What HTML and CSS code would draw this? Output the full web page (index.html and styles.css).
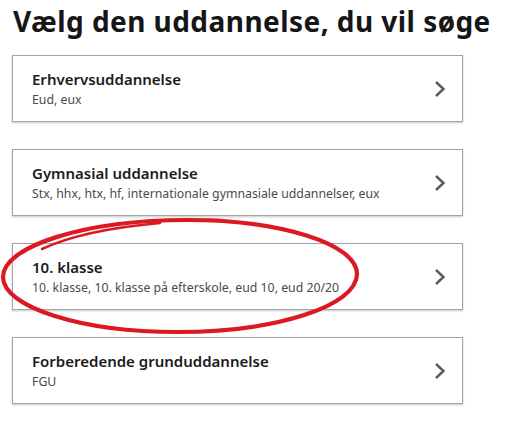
FILE: index.html
```html
<!DOCTYPE html>
<html lang="da">
<head>
<meta charset="utf-8">
<title>Vælg den uddannelse, du vil søge</title>
<link rel="stylesheet" href="styles.css">
</head>
<body>
<main class="page">
  <h1 class="heading">Vælg den uddannelse, du vil søge</h1>
  <ul class="list">
    <li class="card">
      <div class="card-text">
        <div class="card-title">Erhvervsuddannelse</div>
        <div class="card-sub">Eud, eux</div>
      </div>
      <svg class="chev" viewBox="0 0 12 18" width="12" height="18"><path d="M2 2 L9.5 9 L2 16"/></svg>
    </li>
    <li class="card">
      <div class="card-text">
        <div class="card-title">Gymnasial uddannelse</div>
        <div class="card-sub">Stx, hhx, htx, hf, internationale gymnasiale uddannelser, eux</div>
      </div>
      <svg class="chev" viewBox="0 0 12 18" width="12" height="18"><path d="M2 2 L9.5 9 L2 16"/></svg>
    </li>
    <li class="card">
      <div class="card-text">
        <div class="card-title">10. klasse</div>
        <div class="card-sub">10. klasse, 10. klasse på efterskole, eud 10, eud 20/20</div>
      </div>
      <svg class="chev" viewBox="0 0 12 18" width="12" height="18"><path d="M2 2 L9.5 9 L2 16"/></svg>
    </li>
    <li class="card">
      <div class="card-text">
        <div class="card-title">Forberedende grunduddannelse</div>
        <div class="card-sub">FGU</div>
      </div>
      <svg class="chev" viewBox="0 0 12 18" width="12" height="18"><path d="M2 2 L9.5 9 L2 16"/></svg>
    </li>
  </ul>
  <svg class="mark" viewBox="0 0 531 424" width="531" height="424">
    <path d="M187 220 C281 220 357 244 357 274 C357 306 276 332 177 332 C81 332 3 307 3 277 C3 246 86 220 187 220 C200 220 212 220 224 221"/>
    <path class="thin" d="M42 249 C72 235 115 227 160 223"/>
  </svg>
</main>
</body>
</html>
```
FILE: styles.css
```css
html, body {
  margin: 0;
  padding: 0;
  background: #ffffff;
}
.page {
  position: relative;
  width: 531px;
  height: 424px;
  box-sizing: border-box;
  padding: 4px 12px 0 12px;
  font-family: "Noto Sans", "Liberation Sans", sans-serif;
  color: #1b1b1b;
  overflow: hidden;
}
.heading {
  margin: 0 0 17px 1px;
  font-size: 28px;
  line-height: 34px;
  font-weight: 700;
  letter-spacing: 0.45px;
  color: #161616;
  white-space: nowrap;
}
.list {
  list-style: none;
  margin: 0;
  padding: 0;
  width: 451px;
  display: flex;
  flex-direction: column;
  gap: 27px;
}
.card {
  box-sizing: border-box;
  height: 67px;
  border: 1px solid #a3a3a3;
  box-shadow: 0 1px 2px rgba(0, 0, 0, 0.22);
  display: flex;
  align-items: center;
  justify-content: space-between;
  padding: 0 16px 0 19px;
}
.card-text {
  display: flex;
  flex-direction: column;
  gap: 2px;
  align-self: flex-start;
  padding-top: 13px;
}
.card-title {
  font-size: 15px;
  line-height: 20px;
  font-weight: 600;
  color: #1b1b1b;
}
.card-sub {
  font-size: 12.3px;
  line-height: 18px;
  color: #4a4a4a;
}
.chev {
  flex: none;
}
.chev path {
  fill: none;
  stroke: #5a5a5a;
  stroke-width: 2.4;
}
.mark {
  position: absolute;
  left: 0;
  top: 0;
  pointer-events: none;
}
.mark path {
  fill: none;
  stroke: #dc1820;
  stroke-width: 4.2;
  stroke-linecap: round;
}
.mark .thin {
  stroke-width: 2.5;
}
```
